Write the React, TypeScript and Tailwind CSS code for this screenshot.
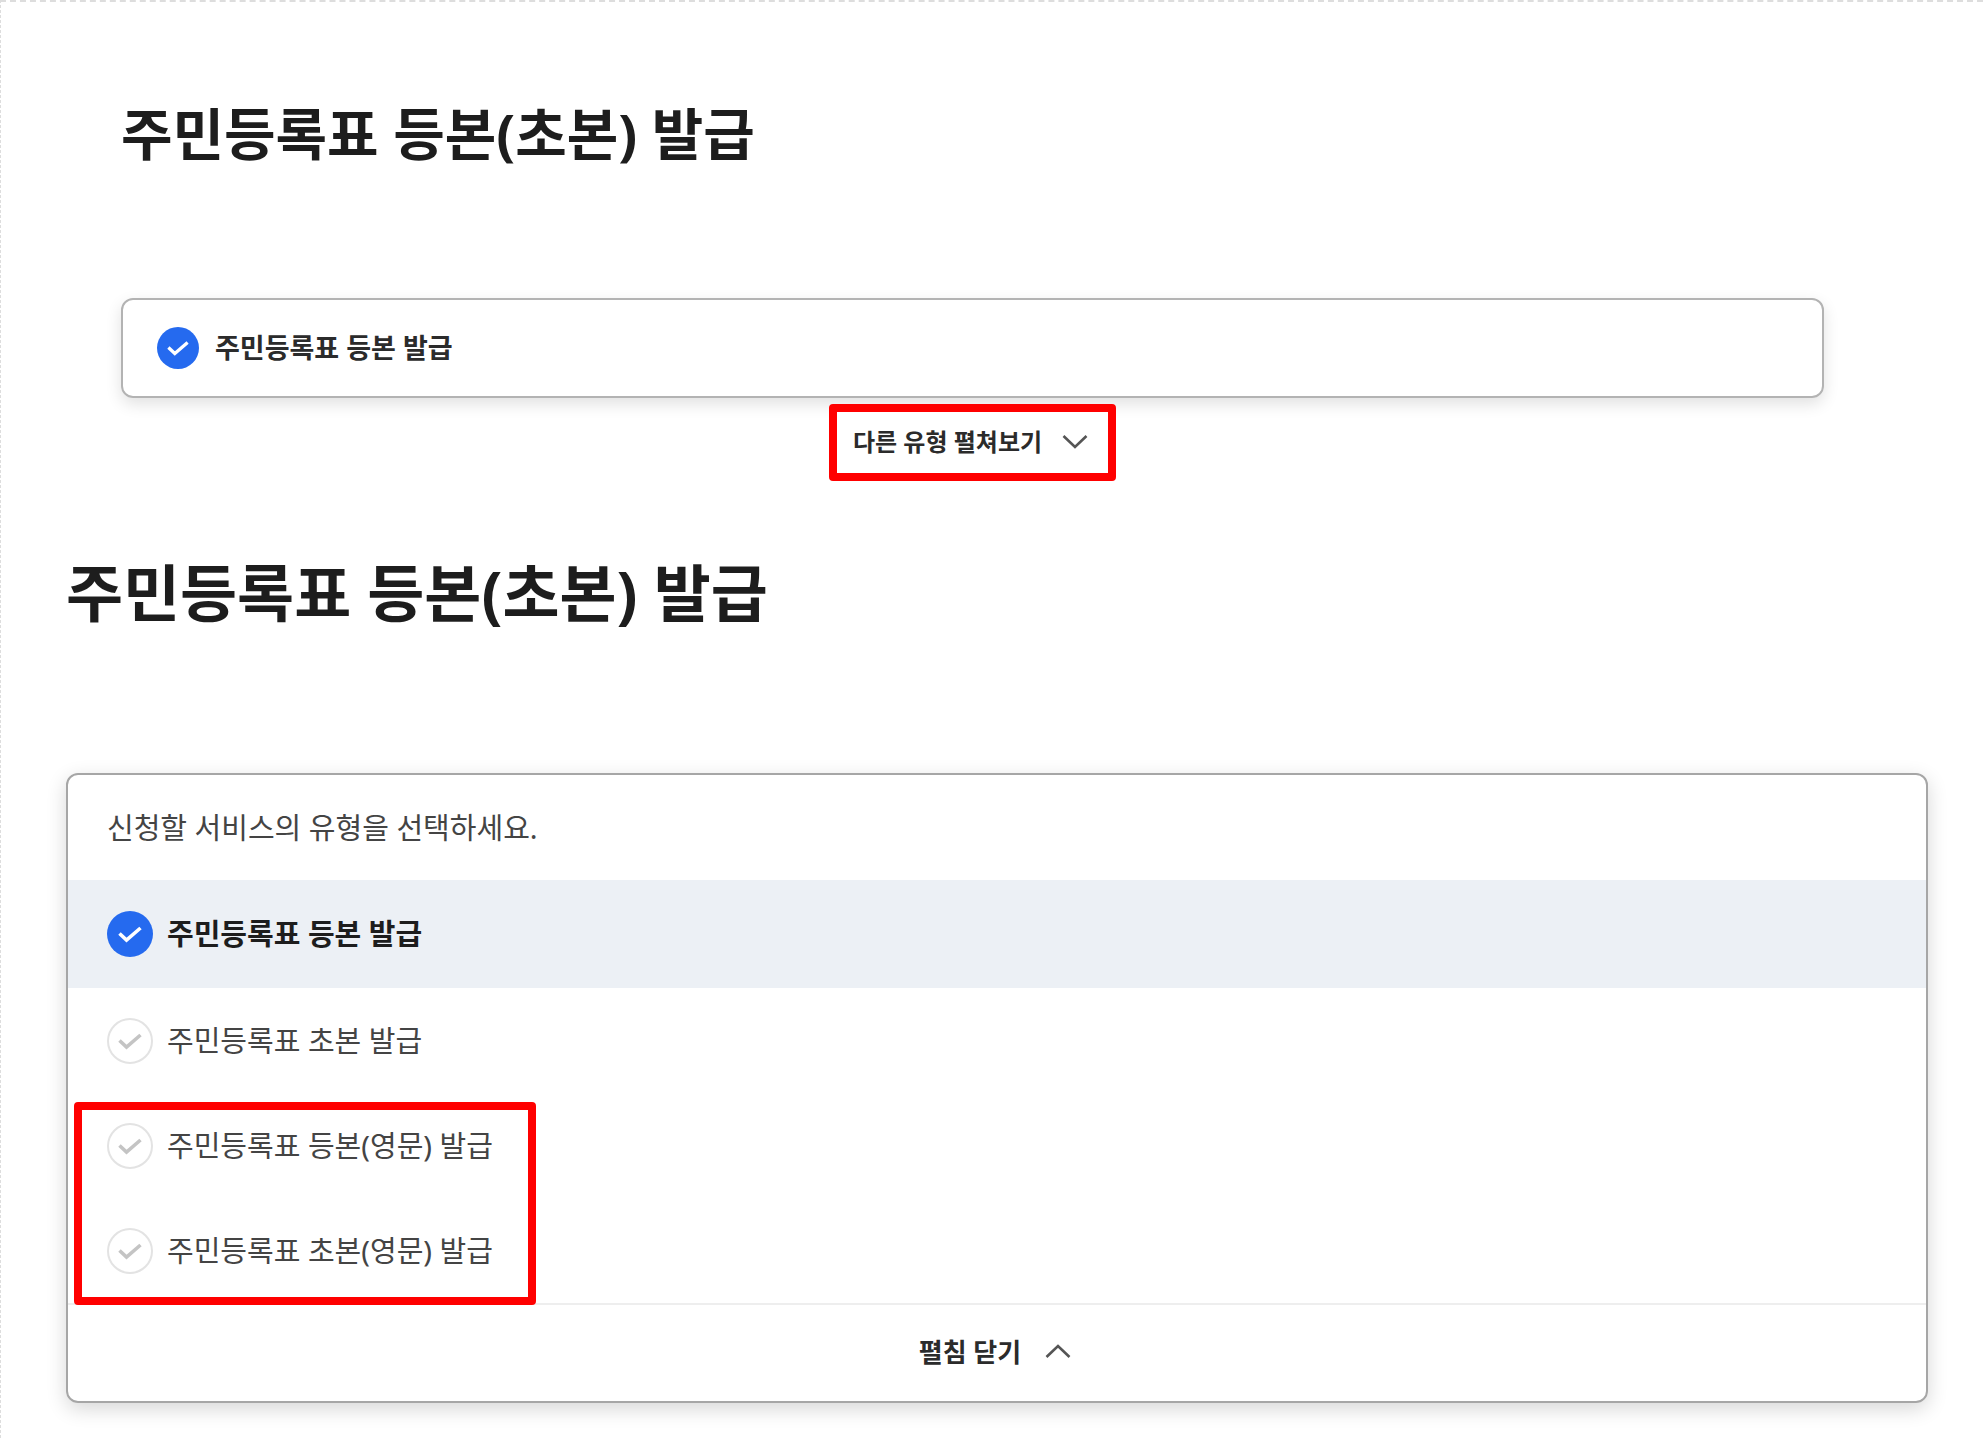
import React, { useState } from 'react';

const options = [
  { id: 'deungbon', label: '주민등록표 등본 발급' },
  { id: 'chobon', label: '주민등록표 초본 발급' },
];

const englishOptions = [
  { id: 'deungbon-en', label: '주민등록표 등본(영문) 발급' },
  { id: 'chobon-en', label: '주민등록표 초본(영문) 발급' },
];

function CheckIcon({ checked, className }: { checked: boolean; className: string }) {
  return (
    <svg viewBox="0 0 46 46" fill="none" className={className} aria-hidden="true">
      <circle
        cx="23"
        cy="23"
        r={checked ? 23 : 22}
        fill={checked ? '#256aef' : '#ffffff'}
        stroke={checked ? 'none' : '#e3e3e3'}
        strokeWidth="2"
      />
      <path d="M12.5 22.5L19.5 29L33.5 17" stroke={checked ? '#ffffff' : '#c4c4c4'} strokeWidth="3.6" />
    </svg>
  );
}

function Chevron({ up = false }: { up?: boolean }) {
  return (
    <svg viewBox="0 0 26 26" fill="none" stroke="#555555" strokeWidth="2.6" className="h-[26px] w-[26px]" aria-hidden="true">
      <path d={up ? 'M1.5 18L13 7L24.5 18' : 'M1.5 7L13 18L24.5 7'} />
    </svg>
  );
}

type OptionProps = {
  id: string;
  label: string;
  checked: boolean;
  onSelect: (id: string) => void;
};

function Option({ id, label, checked, onSelect }: OptionProps) {
  return (
    <label
      htmlFor={id}
      className={`relative flex cursor-pointer items-center gap-[14px] px-[39px] text-[29px] leading-[44px] ${
        checked ? 'h-[108px] bg-[#ecf0f5] font-bold text-[#1d1d1d]' : 'h-[105px] text-[#444444]'
      }`}
    >
      <input
        type="radio"
        id={id}
        name="service-type"
        className="sr-only"
        checked={checked}
        onChange={() => onSelect(id)}
      />
      <CheckIcon checked={checked} className="h-[46px] w-[46px] shrink-0" />
      {label}
    </label>
  );
}

export default function App() {
  const [selected, setSelected] = useState('deungbon');

  return (
    <main className="min-h-screen border-t-2 border-l border-dashed border-[#dddddd] bg-white pb-[33px] font-['Noto_Sans','Noto_Sans_CJK_KR',sans-serif] text-[#1d1d1d]">
      <section className="pt-[89px] pr-[159px] pl-[120px]">
        <h1 className="text-[56px] leading-[84px] font-bold">주민등록표 등본(초본) 발급</h1>

        <div className="mt-[123px] flex h-[100px] items-center gap-4 rounded-xl border-2 border-[#b3b3b3] px-[34px] shadow-[0_6px_16px_rgba(0,0,0,0.12)]">
          <CheckIcon checked className="h-[42px] w-[42px] shrink-0" />
          <p className="text-[27px] leading-10 font-bold text-[#2b2b2b]">주민등록표 등본 발급</p>
        </div>

        <div className="relative mt-[6px] flex justify-center">
          <button
            type="button"
            aria-expanded="false"
            className="flex h-[77px] cursor-pointer items-center gap-5 rounded-sm border-8 border-[#ff0000] bg-white pr-5 pb-[2px] pl-4 text-[24px] leading-9 font-bold text-[#2b2b2b]"
          >
            다른 유형 펼쳐보기
            <Chevron />
          </button>
        </div>
      </section>

      <section className="pt-[66px] pr-[55px] pl-[65px]">
        <h2 className="text-[62px] leading-[92px] font-bold">주민등록표 등본(초본) 발급</h2>

        <div className="mt-[134px] rounded-xl border-2 border-[#a6a6a6] shadow-[0_6px_20px_rgba(0,0,0,0.16)]">
          <fieldset aria-label="서비스 유형">
            <p className="flex h-[105px] items-center px-[39px] text-[29px] leading-[44px] text-[#444444]">
              신청할 서비스의 유형을 선택하세요.
            </p>
            {options.map((option) => (
              <Option key={option.id} {...option} checked={selected === option.id} onSelect={setSelected} />
            ))}
            <div className="relative">
              {englishOptions.map((option) => (
                <Option key={option.id} {...option} checked={selected === option.id} onSelect={setSelected} />
              ))}
              <div className="pointer-events-none absolute top-[9px] -bottom-[2px] left-[6px] w-[462px] rounded-sm border-8 border-[#ff0000]" />
            </div>
          </fieldset>

          <button
            type="button"
            aria-expanded="true"
            className="flex h-[98px] w-full cursor-pointer items-center justify-center gap-6 border-t-2 border-[#eeeeee] pr-1 pb-[2px] text-[26px] leading-10 font-bold text-[#2b2b2b]"
          >
            펼침 닫기
            <Chevron up />
          </button>
        </div>
      </section>
    </main>
  );
}
